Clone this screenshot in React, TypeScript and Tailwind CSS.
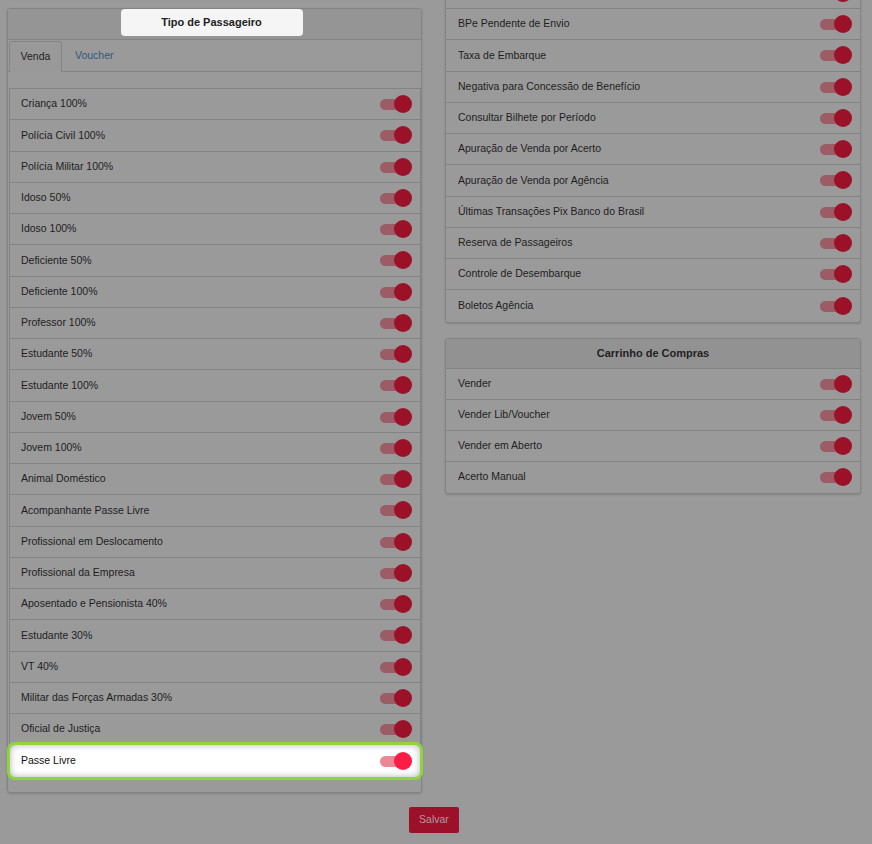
const passageiros = [
  'Criança 100%',
  'Polícia Civil 100%',
  'Polícia Militar 100%',
  'Idoso 50%',
  'Idoso 100%',
  'Deficiente 50%',
  'Deficiente 100%',
  'Professor 100%',
  'Estudante 50%',
  'Estudante 100%',
  'Jovem 50%',
  'Jovem 100%',
  'Animal Doméstico',
  'Acompanhante Passe Livre',
  'Profissional em Deslocamento',
  'Profissional da Empresa',
  'Aposentado e Pensionista 40%',
  'Estudante 30%',
  'VT 40%',
  'Militar das Forças Armadas 30%',
  'Oficial de Justiça',
]

const relatorios = [
  'BPe Pendente de Envio',
  'Taxa de Embarque',
  'Negativa para Concessão de Benefício',
  'Consultar Bilhete por Período',
  'Apuração de Venda por Acerto',
  'Apuração de Venda por Agência',
  'Últimas Transações Pix Banco do Brasil',
  'Reserva de Passageiros',
  'Controle de Desembarque',
  'Boletos Agência',
]

const carrinho = ['Vender', 'Vender Lib/Voucher', 'Vender em Aberto', 'Acerto Manual']

function Toggle({ lit = false }: { lit?: boolean }) {
  return (
    <div className="relative h-[18px] w-[32px] shrink-0">
      <div
        className={`absolute left-0 top-[4px] h-[11px] w-[26px] rounded-full ${
          lit ? 'bg-[#ec8795]' : 'bg-[#9b5c66]'
        }`}
      />
      <div
        className={`absolute right-0 top-0 h-[18px] w-[18px] rounded-full ${
          lit ? 'bg-[#fc1c44]' : 'bg-[#9b1128]'
        }`}
      />
    </div>
  )
}

function Row({
  label,
  right = false,
  last = false,
  short = false,
}: {
  label: string
  right?: boolean
  last?: boolean
  short?: boolean
}) {
  return (
    <div
      className={`flex items-center justify-between ${short ? 'h-[31px]' : 'h-[31.25px]'} ${
        last ? '' : 'border-b border-[#838383]'
      } ${right ? 'pl-[12px] pr-[8px]' : 'pl-[11px] pr-[8px]'}`}
    >
      <span>{label}</span>
      <Toggle />
    </div>
  )
}

export default function App() {
  return (
    <div
      className="min-h-[844px] overflow-hidden bg-[#9a9a9a] text-[10.5px] text-[#1e1e1e]"
      style={{ fontFamily: '"Liberation Sans", Arial, sans-serif' }}
    >
      <div className="flex gap-[23px] pl-[7px] pt-[8px]">
        {/* Tipo de Passageiro */}
        <div className="w-[415px] rounded-[3px] border border-[#848484] shadow-[0_1px_2px_rgba(0,0,0,0.15)]">
          <div className="flex h-[31px] justify-center border-b border-[#848484] bg-[#959595] pr-[6px]">
            <div className="flex h-[27px] w-[182px] items-center justify-center rounded-[4px] bg-[#f5f5f5] text-[11px] font-semibold text-[#222]">
              Tipo de Passageiro
            </div>
          </div>
          <div className="flex h-[32px] items-end border-b border-[#848484] pl-[1px]">
            <div className="-mb-px flex h-[31px] w-[53px] items-center justify-center rounded-t-[3px] border border-b-0 border-[#848484] bg-[#999999]">
              Venda
            </div>
            <div className="flex h-[31px] items-center pl-[13px] text-[#2f587c]">Voucher</div>
          </div>
          <div className="pb-[15px] pl-[1px] pt-[16px]">
            <div className="border-x border-t border-[#838383]">
              {passageiros.map((p) => (
                <Row key={p} label={p} />
              ))}
              <div className="relative z-10 flex h-[31.25px] items-center justify-between rounded-[5px] bg-white pl-[11px] pr-[8px] text-[#111] shadow-[inset_0_0_7px_rgba(0,0,0,0.3),0_0_0_3px_#8fd43e]">
                <span>Passe Livre</span>
                <Toggle lit />
              </div>
            </div>
          </div>
        </div>

        {/* Coluna direita */}
        <div className="flex w-[416px] flex-col">
          <div className="-mt-[30.25px] rounded-b-[3px] border-x border-b border-[#838383] shadow-[0_1px_2px_rgba(0,0,0,0.15)]">
            <Row label="" right />
            {relatorios.map((r, i) => (
              <Row key={r} label={r} right last={i === relatorios.length - 1} />
            ))}
          </div>

          <div className="mt-[15px] rounded-[3px] border border-[#838383] shadow-[0_1px_2px_rgba(0,0,0,0.15)]">
            <div className="flex h-[30px] items-center justify-center border-b border-[#838383] bg-[#929292] text-[11px] font-semibold text-[#222]">
              Carrinho de Compras
            </div>
            {carrinho.map((c, i) => (
              <Row key={c} label={c} right short last={i === carrinho.length - 1} />
            ))}
          </div>
        </div>
      </div>

      <div className="flex justify-center pr-[4px] pt-[14px]">
        <button className="h-[26px] w-[50px] rounded-[2px] bg-[#9c1129] text-[10.5px] text-[#b09aa0]">Salvar</button>
      </div>
    </div>
  )
}
